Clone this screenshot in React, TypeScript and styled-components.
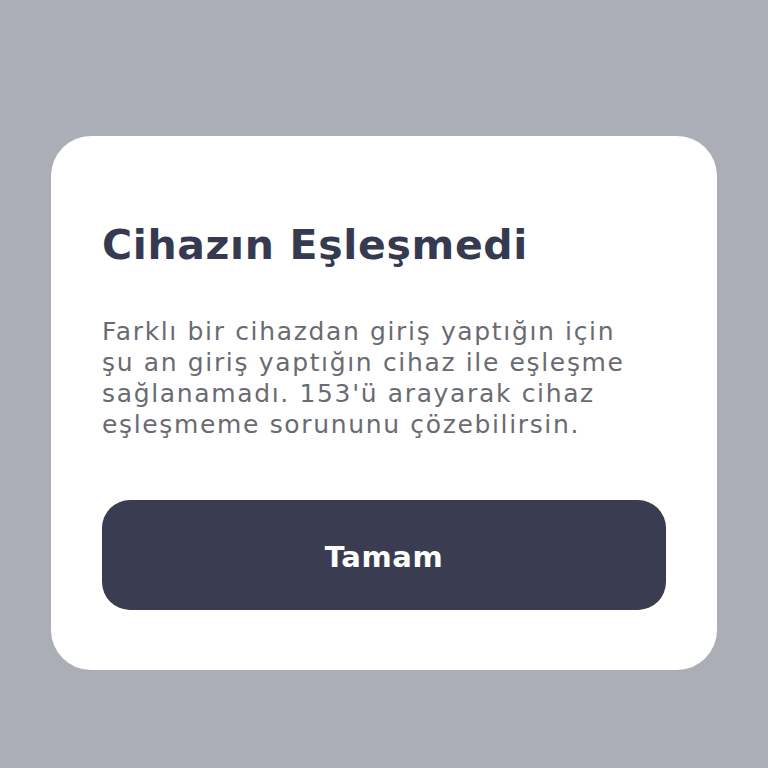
import React from "react";
import styled, { createGlobalStyle } from "styled-components";

const Global = createGlobalStyle`
  html, body { margin: 0; padding: 0; }
  body { background: #abaeb6; font-family: "DejaVu Sans", "Noto Sans", sans-serif; }
`;

const Page = styled.div`
  width: 768px;
  height: 768px;
  box-sizing: border-box;
  padding: 136px 51px 0 51px;
`;

const Card = styled.div`
  background: #ffffff;
  border-radius: 40px;
  height: 534px;
  box-sizing: border-box;
  padding: 80px 51px 0 51px;
  display: flex;
  flex-direction: column;
`;

const Title = styled.h1`
  margin: 0;
  font-size: 41px;
  font-weight: 700;
  color: #353a50;
  line-height: 58px;
  letter-spacing: 0.65px;
`;

const Body = styled.p`
  margin: 42px 0 0 0;
  font-size: 25px;
  line-height: 31px;
  color: #6a6b72;
  font-weight: 400;
  letter-spacing: 1.65px;
  white-space: nowrap;
`;

const Button = styled.button`
  margin-top: 60px;
  height: 110px;
  width: 100%;
  border: none;
  border-radius: 28px;
  background: #3a3d52;
  color: #ffffff;
  font-family: inherit;
  font-size: 29px;
  font-weight: 700;
  letter-spacing: 0.6px;
  padding: 4px 0 0 0;
`;

export default function App() {
  return (
    <>
      <Global />
      <Page>
        <Card>
          <Title>Cihazın Eşleşmedi</Title>
          <Body>
            Farklı bir cihazdan giriş yaptığın için
            <br />
            şu an giriş yaptığın cihaz ile eşleşme
            <br />
            sağlanamadı. 153'ü arayarak cihaz
            <br />
            eşleşmeme sorununu çözebilirsin.
          </Body>
          <Button>Tamam</Button>
        </Card>
      </Page>
    </>
  );
}
